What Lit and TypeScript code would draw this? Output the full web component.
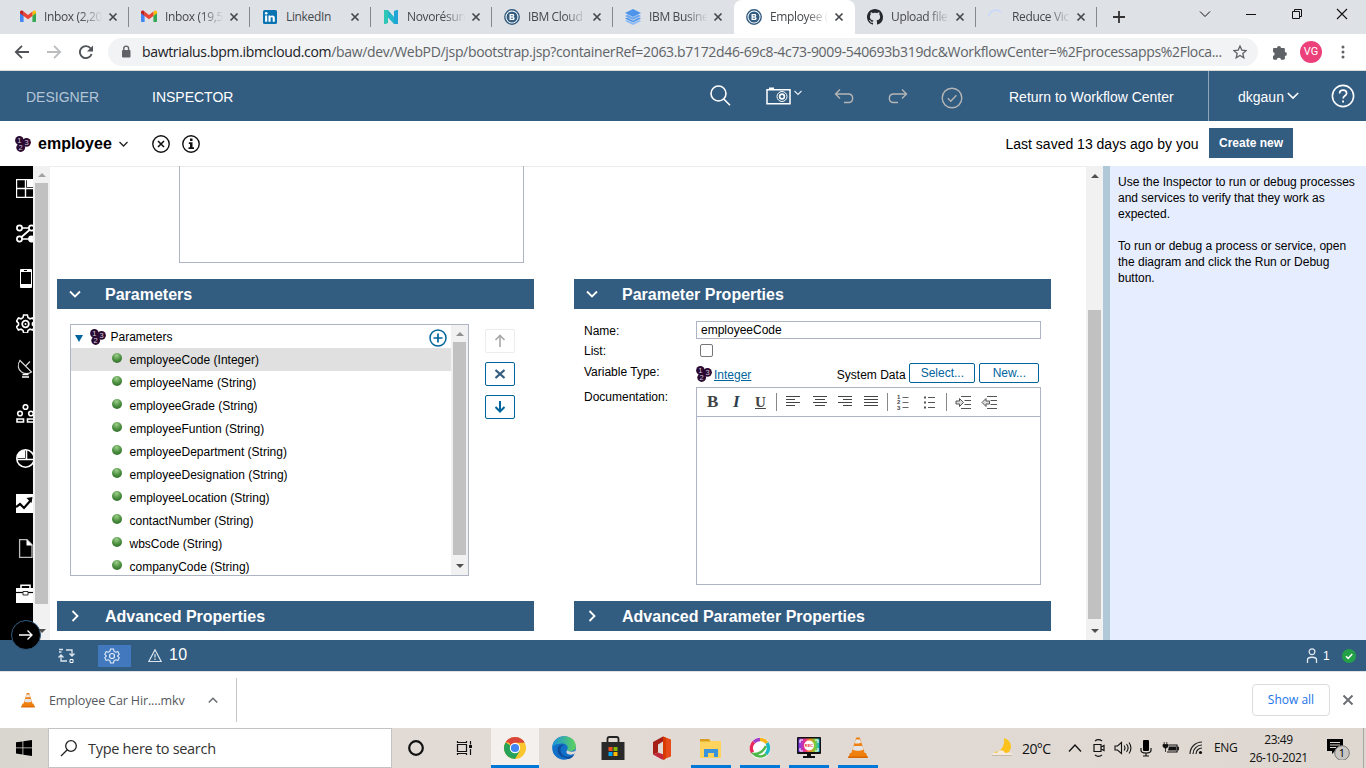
import { LitElement, html, svg, css } from "lit";
import { customElement } from "lit/decorators.js";

const icon = (w: number, h: number, body: unknown, cls = "") =>
  html`<svg class="ic ${cls}" width=${w} height=${h} viewBox="0 0 ${w} ${h}" fill="none">${body}</svg>`;

const gmail = svg`<path d="M0 3v9.200c0 .5.4.8.9.8H3.600V6z" fill="#4285f4"/><path d="M12.400 6v7h2.700c.5 0 .9-.3.9-.8V3z" fill="#34a853"/><path d="M12.400 3v4L16 4.300V3c0-1.300-1.500-2-2.600-1.200z" fill="#fbbc04"/><path d="M3.600 7V2.600L8 5.900l4.400-3.300V7L8 10.300z" fill="#ea4335"/><path d="M0 3v1.300L3.600 7V2.600l-1-.8C1.500 1 0 1.700 0 3z" fill="#c5221f"/>`;
const linkedin = svg`<rect x="1" y="1" width="14" height="14" rx="1.500" fill="#0a73b1"/><circle cx="4.200" cy="4.300" r="1.300" fill="#fff"/><path d="M3.100 6.500h2.100v6.200H3.100zM6.500 6.500h2v.9c.8-1.400 4.300-1.500 4.300 1.600v3.700h-2.100V9.300c0-1.500-2.100-1.300-2.100 0v3.400H6.500z" fill="#fff"/>`;
const novo = svg`<path d="M1 1h4l6 7V2l4-1v14h-4L5 8.500V14l-4 1z" fill="#23b5c9"/><path d="M1 1h4v13l-4 1z" fill="#2ec7b6"/><path d="M11 2l4-1v14h-4z" fill="#1fa6d6"/>`;
const ibm = svg`<circle cx="8" cy="8" r="7.200" stroke="#325c80" stroke-width="1.400" fill="#fff"/><circle cx="8" cy="8" r="5.500" fill="#325c80"/><path d="M5.500 5h3.300c1.900 0 1.900 2.600.5 2.900 1.900.3 1.800 3.100-.4 3.100H5.500z" fill="#fff"/><path d="M6.800 6.800h2M6.800 9.200h2.200" stroke="#325c80"/>`;
const layers = svg`<path d="M8 0l8 4-8 4-8-4z" fill="#4d94ea"/><path d="M0 7l2.500-1.200L8 8.600l5.500-2.800L16 7l-8 4z" fill="#6ba6f0"/><path d="M0 9.500l2-.9L8 11.700l6-3.100 2 .9-8 4z" fill="#4d94ea"/><path d="M0 12l2-.9 6 3 6-3 2 .9-8 4z" fill="#8abaf5"/>`;
const github = svg`<path fill="#24292f" d="M8 0C3.580 0 0 3.580 0 8c0 3.540 2.290 6.530 5.470 7.590.4.070.55-.17.55-.38 0-.19-.01-.82-.01-1.490-2.010.37-2.530-.49-2.690-.94-.09-.23-.48-.94-.82-1.130-.28-.15-.68-.52-.01-.53.63-.01 1.080.58 1.230.82.72 1.210 1.870.87 2.330.66.07-.52.28-.87.51-1.070-1.780-.2-3.640-.89-3.640-3.950 0-.87.31-1.590.82-2.150-.08-.2-.36-1.020.08-2.120 0 0 .67-.21 2.200.82.64-.18 1.320-.27 2-.27s1.360.09 2 .27c1.530-1.040 2.200-.82 2.200-.82.44 1.100.16 1.920.08 2.120.51.56.82 1.270.82 2.150 0 3.070-1.870 3.750-3.650 3.950.29.25.54.73.54 1.480 0 1.070-.01 1.930-.01 2.200 0 .21.15.46.55.38A8 8 0 0 0 16 8c0-4.420-3.580-8-8-8z"/>`;
const spinner = svg`<path d="M1 7a7.200 7.200 0 0 1 12-4" stroke="#c6d8fb" stroke-width="1.700"/>`;

const TABS: [unknown, string, boolean?][] = [
  [gmail, "Inbox (2,20"], [gmail, "Inbox (19,5"], [linkedin, "LinkedIn"],
  [novo, "Novorésun"], [ibm, "IBM Cloud"], [layers, "IBM Busine"],
  [ibm, "Employee (", true], [github, "Upload file"], [spinner, "Reduce Vic"],
];

const FIELDS = ["employeeCode (Integer)", "employeeName (String)", "employeeGrade (String)", "employeeFuntion (String)",
  "employeeDepartment (String)", "employeeDesignation (String)", "employeeLocation (String)", "contactNumber (String)",
  "wbsCode (String)", "companyCode (String)"];

const typeIcon = (s = 16) => html`<svg class="ic" width=${s} height=${s} viewBox="0 0 16 16"><g fill="#2a0a30"><circle cx="4.400" cy="4.400" r="4.300"/><circle cx="11.500" cy="6.300" r="4.400"/><circle cx="5.700" cy="11.500" r="4.400"/><path d="M4 4h7v4l-6 4z"/></g><g fill="#d5c9da" font-family="Liberation Sans" font-size="7.500" text-anchor="middle"><text x="4.300" y="7">1</text><text x="11.700" y="9">3</text><text x="5.600" y="14.300">2</text></g></svg>`;

const RAIL = [
  svg`<path d="M.5.500h18v18H.5zM.5 9.500h18M9.500.500v18" stroke="#fff" stroke-width="1.400"/><path d="M11 0h8v8h-8z" fill="#fff"/>`,
  svg`<g stroke="#fff" stroke-width="1.700"><circle cx="3.500" cy="4" r="2.600"/><circle cx="15.500" cy="4" r="2.600"/><circle cx="3.500" cy="15" r="2.600"/><path d="M6 4h7M13.500 6L5.500 13M6 15h7"/></g><circle cx="15.500" cy="15" r="3.400" fill="#fff"/>`,
  svg`<rect x="4" y="0" width="12" height="19" rx="1" fill="#fff"/><rect x="5" y="3" width="10" height="12" fill="#000"/><path d="M8 1.500h3" stroke="#000"/>`,
  svg`<path d="M7.600 1h3.800l.6 2.600 2 1.200 2.600-.8 1.900 3.200-2 1.900v1.800l2 1.900-1.900 3.200-2.600-.8-2 1.200-.6 2.600H7.600L7 16.400l-2-1.200-2.600.8L.5 12.800l2-1.900V9.100l-2-1.900L2.400 4l2.600.8 2-1.200z" stroke="#fff" stroke-width="1.600"/><circle cx="9.500" cy="10" r="3.300" stroke="#fff" stroke-width="1.800"/><circle cx="9.500" cy="10" r="1" fill="#fff"/>`,
  svg`<path d="M4 1.500c-3 4-2 9 1.500 11.500 3 2 7 2 10 0L3.500 1M9.500 7L14 2.500" stroke="#ddd" stroke-width="1.100"/><path d="M6.500 15.500h6M6 18h7" stroke="#fff" stroke-width="1.500"/>`,
  svg`<g stroke="#fff" stroke-width="1.600"><circle cx="9.500" cy="3" r="2.300"/><circle cx="4" cy="9.500" r="2.300"/><circle cx="15" cy="9.500" r="2.300"/><path d="M1 18v-3h6.500v3zM11.500 18v-3H18v3z"/></g>`,
  svg`<circle cx="9.500" cy="9.500" r="8.700" stroke="#fff" stroke-width="1.600"/><path d="M9 9V1A8.300 8.300 0 0 0 1 9z" fill="#fff"/><path d="M1 10.500h17M10.500 1v9" stroke="#fff" stroke-width="1.600"/>`,
  svg`<path d="M0 0h19v19H0z" fill="#fff"/><path d="M0 13l4-3 4 4 7-8" stroke="#000" stroke-width="2.200"/><path d="M10.500 4l6-1-1 6z" fill="#000"/>`,
  svg`<path d="M3.600.7H11l5 5v12.600H3.600z" stroke="#bbb" stroke-width="1.300"/><path d="M10.500.500v6h6z" fill="#fff"/>`,
  svg`<path d="M5 4V1.200h9V4" stroke="#fff" stroke-width="1.600"/><path d="M0 4h19v15H0z" fill="#fff"/><path d="M0 8.500h19" stroke="#000" stroke-width="1.200"/><path d="M7 7.500h5v3.500H7z" fill="#fff" stroke="#333"/>`,
];

const cone = svg`<path d="M9.200 1.500h3.600L18 18H4z" fill="#f08011"/><path d="M8 6l.9-2.500h4.200L14 6.800c-1.500 1-4.500 1-6.400.400z" fill="#e8e8e8"/><path d="M6.600 10h8.800l1.100 3.500c-3 1.700-8 1.700-11 0z" fill="#e4e4e4"/><path d="M3 17h16l1.800 5H1.200z" fill="#ef7f0c"/><path d="M1.200 20.500h19.600V22H1.200z" fill="#d96500"/>`;

@customElement("app-root")
export class AppRoot extends LitElement {
  static styles = css`
    :host { display: flex; flex-direction: column; width: 1366px; height: 768px; overflow: hidden; background: #fff; color: #000;
      font: 12px/14px "Liberation Sans", Arial, sans-serif; }
    * { box-sizing: border-box; }
    .ic { display: block; flex: none; }
    .ui { font-family: "Open Sans", "Noto Sans", sans-serif; white-space: nowrap; }

    .tabs { display: flex; height: 34px; background: #dee1e6; padding-left: 8px; flex: none; }
    .tab { display: flex; align-items: center; width: 121px; height: 34px; padding-left: 12px; flex: none; }
    .tab .label { width: 62px; margin: 0 3px 0 8px; font-size: 12px; letter-spacing: -.35px; line-height: 18px; color: #45484c;
      -webkit-mask-image: linear-gradient(90deg, #000 60%, transparent 96%); }
    .tab .label.short { -webkit-mask-image: none; }
    .tab::after { content: ""; width: 1px; height: 20px; background: #85888c; margin-left: 10px; flex: none; }
    .tab.before::after, .tab.on::after { background: transparent; }
    .tab.on { background: #fff; border-radius: 8px 8px 0 0; }
    .win { flex: 1; display: grid; grid-template-columns: 86px 46px 46px 45px auto; padding-left: 16px; align-items: start; }
    .win .ic { margin-top: 8px; }
    .win .ic.plus { margin-top: 11px; }

    .bar { display: grid; grid-template-columns: 33px 32px 29px 1164px 28px 40px auto; align-items: center; height: 37px; padding-left: 14px;
      border-bottom: 1px solid #d9dbd8; flex: none; }
    .pill { width: 1150px; height: 28px; border-radius: 14px; background: #f1f3f4; display: flex; align-items: center; padding-left: 12px; }
    .pill .url { width: 1091px; margin-left: 10px; font-size: 14px; line-height: 20px; letter-spacing: -.33px; color: #5f6368; padding-bottom: 1px; }
    .url b { font-weight: 400; color: #202124; }
    .avatar { width: 22px; height: 22px; border-radius: 50%; background: #ec407a; color: #fff; font: 11px/22px Roboto, sans-serif; text-align: center; }

    .head { display: grid; grid-template-columns: 126px 558px 56px 68px 53px 54px 68px 199px 123px auto; align-items: center; height: 50px;
      padding-left: 26px; background: #325c80; color: #fff; font-size: 14px; line-height: 16px; flex: none; }
    .head span { padding-top: 2px; }
    .head .dim { color: #b4c6d6; }
    .user { height: 50px; border-left: 1px solid #8ea6ba; padding-left: 29px; display: flex; align-items: center; gap: 3px; }
    .low { margin-top: 3px; }

    .sub { display: grid; grid-template-columns: 23px 80px 34px 30px 824px 203px 84px; align-items: center; height: 45px; padding-left: 15px; flex: none; }
    .sub .ic { margin-top: 1px; }
    .sub .name { font-size: 16px; font-weight: 700; line-height: 20px; padding-top: 1px; }
    .sub .saved { font-size: 14px; line-height: 16px; margin-left: -.5px; }
    .create { width: 84px; height: 30px; background: #325c80; color: #fff; font-weight: 700; text-align: center; line-height: 29px; padding-top: 1px; margin-bottom: 2px; }

    .main { display: flex; height: 474px; flex: none; position: relative; }
    .rail { width: 33px; background: #000; padding: 13px 0 0 16px; overflow: hidden; display: flex; flex-direction: column; gap: 26px; }
    .sb { background: #f1f1f1; display: flex; flex-direction: column; align-items: center; justify-content: space-between; flex: none; }
    .thumb { width: 13px; background: #c1c1c1; }
    .sb.l { width: 17px; padding: 7px 0 7px; }
    .sb.l .thumb { height: 421px; margin: 6px 0 auto; }
    .sb.r { width: 17px; padding: 8px 0 7px; }
    .sb.r .thumb { height: 309px; margin: 132px 0 auto; }
    .go { position: absolute; left: 11px; top: 454px; width: 30px; height: 30px; border-radius: 50%; background: #000; border: 1.500px solid #325c80;
      display: flex; align-items: center; justify-content: center; z-index: 2; }
    .content { width: 1036px; padding-left: 7px; border-top: 1px solid #ececec; flex: none; }
    .docbox { width: 345px; height: 97px; margin-left: 122px; border: 1px solid #aeb4c4; border-top: 0; margin-top: -1px; }
    .cols { display: grid; grid-template-columns: 477px 477px; column-gap: 40px; margin-top: 16px; }
    .sect { height: 30px; background: #325c80; color: #fff; font-size: 16px; font-weight: 700; line-height: 28px; display: flex; align-items: center; padding-left: 12px; }
    .sect span { padding-top: 2px; }
    .sect .ic { margin-right: 24px; }
    .left { display: flex; height: 292px; padding: 15px 0 0 13px; gap: 16px; }
    .tree { width: 399px; height: 252px; border: 1px solid #aeb4c4; display: flex; overflow: hidden; }
    .rows { width: 380px; }
    .root { height: 23px; display: flex; align-items: center; padding-left: 4px; }
    .root .grow { flex: 1; margin-left: 4.500px; }
    .root .tri { margin: 4px 7px 0 0; }
    .root .add { margin: 2px 4px 0 0; }
    .row { height: 23px; display: flex; align-items: center; padding-left: 41px; gap: 7.500px; line-height: 21px; }
    .row span { padding-top: 2px; }
    .row.sel { background: #e0e0e0; }
    .dot { width: 10px; height: 10px; border-radius: 50%; margin-bottom: 4px; background: radial-gradient(circle at 45% 25%, #9ccf8a, #4b8f3f 50%, #245c22); }
    .sb.t { width: 17px; padding: 7px 0 7px; }
    .sb.t .thumb { height: 213px; margin: 6px 0 auto; }
    .side { display: flex; flex-direction: column; gap: 9px; padding-top: 5px; }
    .btn { border: 1px solid #00649d; border-radius: 2px; display: flex; align-items: center; justify-content: center; color: #00649d; background: #fff; }
    .side .btn { width: 30px; height: 24px; }
    .side .btn.off { border-color: #ececec; }
    .props { display: grid; grid-template-columns: 112px 345px; grid-template-rows: 20px 20px 26px 198px; padding: 12px 0 0 10px; height: 292px; }
    .input { height: 18px; border: 1px solid #aeb4c4; padding-left: 4px; line-height: 16px; }
    .lab { line-height: 20px; }
    .lab.v { padding-top: 1px; }
    .check { width: 13px; height: 13px; border: 1px solid #767676; border-radius: 2px; margin: 3px 0 0 4px; }
    .vt { display: flex; align-items: center; padding: 1px 0 4px; }
    .vt a { color: #00649d; text-decoration: underline; margin: 4px 85px 0 2px; }
    .vt .sys { margin: 4px 3px 0 .5px; width: 69.500px; white-space: nowrap; }
    .vt .btn { width: 66px; height: 20px; line-height: 18px; margin-right: 4px; }
    .vt .btn.new { width: 60px; margin: 0; }
    .vt .ic { margin-top: 3px; }
    .editor { border: 1px solid #aeb4c4; }
    .tools { display: grid; grid-template-columns: 26px 22px 22px 9px 27px 26px 26px 23px 10px 27px 22px 9px 26px 17px; align-items: center; height: 29px;
      padding-left: 9px; border-bottom: 1px solid #aeb4c4; font: bold 17px/20px "Liberation Serif", serif; color: #444; }
    .tools .sep { width: 1px; height: 18px; background: #888; }
    .tools b { padding-left: 1px; }
    .tools i { padding-left: 1px; color: #2c3e50; }
    .tools u { font-size: 15px; padding-left: 1px; }
    .split { width: 7px; background: #b0c8d8; }
    .help { flex: 1; background: #e6edfe; padding: 8px 8px 0; line-height: 16px; }
    .help p { margin: 0 0 16px; white-space: nowrap; }

    .status { display: grid; grid-template-columns: 40px 50px 21px 1137px 17px 19px auto; align-items: center; height: 31px; padding-left: 58px;
      background: #325c80; color: #fff; flex: none; }
    .status .cog { width: 33px; height: 22px; background: #4178be; display: flex; align-items: center; padding-left: 6px; margin-top: 1px; }
    .status .num { font-size: 16px; line-height: 20px; padding-bottom: 1px; letter-spacing: .3px; }
    .status .one { padding-top: 1px; }

    .dl { display: flex; align-items: center; height: 57px; border-top: 1px solid #dfe1e5; padding-left: 21px; flex: none; }
    .dl .file { width: 136px; margin: 1px 23px 0 14px; font-size: 12.500px; letter-spacing: -.13px; line-height: 18px; color: #55585c; }
    .dl .line { width: 1px; height: 44px; background: #c4c6c9; margin: 0 1015px 0 18px; }
    .show { width: 78px; height: 32px; border: 1px solid #dadce0; border-radius: 4px; color: #1a73e8; text-align: center; line-height: 29px; font-size: 12px; font-weight: 500; margin-right: 12px; }

    .task { display: flex; height: 40px; background: linear-gradient(90deg, #d9d6d0, #e2dad5 30%, #e1dad4 70%, #ded8d1); flex: none; color: #111; }
    .start { width: 48px; display: flex; align-items: center; justify-content: center; }
    .search { width: 344px; border: 1px solid #c4c3c2; background: #fff; display: flex; align-items: center; padding-left: 11px; gap: 10px; font-size: 14.500px; letter-spacing: -.3px; color: #333; }
    .search span { padding-top: 1px; }
    .app { width: 49px; display: flex; align-items: center; justify-content: center; flex: none; }
    .app.cort { width: 48px; }
    .app.tv { width: 51px; padding-right: 3px; }
    .app.cur { width: 48px; background: #f3f0ed; border-bottom: 3px solid #0078d7; padding-top: 3px; }
    .app.run { border-bottom: 3px solid #0078d7; width: 40px; margin-left: 9px; padding-top: 3px; }
    .app.run.first { margin-left: 5px; }
    .tray { display: grid; grid-template-columns: 31px 46px 24px 22px 26px 22px 27px 25px 35px 77px 37px auto; align-items: center; margin-left: 113px; }
    .tray .deg { font-size: 14px; letter-spacing: -.6px; padding-top: 1px; }
    .tray .lang, .tray .clock { font-size: 12px; letter-spacing: -.4px; }
    .tray .clock { line-height: 18px; width: 59px; display: flex; flex-direction: column; align-items: center; padding-top: 1px; }
    .tray .edge { height: 40px; border-left: 1px solid #aaa6a2; }
  `;

  private arrow(up: boolean, c = "#505050") {
    return icon(8, 4, svg`<path d=${up ? "M0 4l4-4 4 4z" : "M0 0h8L4 4z"} fill=${c}/>`);
  }

  private sect(open: boolean, t: string) {
    return html`<div class="sect">${icon(12, 12, svg`<path d=${open ? "M1 3.500l5 5 5-5" : "M3.500 1l5 5-5 5"} stroke="#fff" stroke-width="1.800"/>`)}<span>${t}</span></div>`;
  }

  private lines(rows: number[][]) {
    return icon(16, 14, svg`${rows.map(([x, w], i) => svg`<path d="M${x} ${1.5 + i * (9 / (rows.length - 1))}h${w}" stroke="#444"/>`)}`);
  }

  render() {
    const x = svg`<path d="M1.500 1.500l7 7M8.500 1.500l-7 7" stroke="#45494d" stroke-width="1.700"/>`;
    return html`
      <div class="tabs">
        ${TABS.map(([g, t, on], i) => html`<div class="tab ${on ? "on" : ""} ${i === 5 ? "before" : ""}">${icon(16, 16, g)}<span class="label ui ${i === 2 ? "short" : ""}">${t}</span>${icon(10, 10, x)}</div>`)}
        <div class="win">
          ${icon(12, 12, svg`<path d="M6 0v12M0 6h12" stroke="#333" stroke-width="1.800"/>`, "plus")}
          ${icon(12, 12, svg`<path d="M1 3.500l5 5 5-5" stroke="#111"/>`)}
          ${icon(12, 12, svg`<path d="M1 6.500h10" stroke="#111"/>`)}
          ${icon(12, 12, svg`<path d="M1.500 3.500h7v7h-7zM3.500 3.500v-2h7v7h-2" stroke="#111"/>`)}
          ${icon(12, 12, svg`<path d="M1 1l10 10M11 1L1 11" stroke="#111" stroke-width="1.100"/>`)}
        </div>
      </div>
      <div class="bar">
        ${icon(15, 14, svg`<path d="M15 7H2M8 .8L1.800 7 8 13.200" stroke="#505357" stroke-width="1.800"/>`)}
        ${icon(15, 14, svg`<path d="M0 7h13M7 .8L13.200 7 7 13.200" stroke="#babcbe" stroke-width="1.800"/>`)}
        ${icon(15, 14, svg`<path d="M12.600 9a6 6 0 1 1-.9-5.500" stroke="#505357" stroke-width="1.900"/><path d="M14 .5v6H8z" fill="#505357"/>`)}
        <div class="pill">
          ${icon(12, 14, svg`<rect x="2" y="5" width="8.500" height="7.500" rx="1" fill="#5f6368"/><path d="M3.800 6V3.500a2.400 2.400 0 0 1 4.800 0V6" stroke="#5f6368" stroke-width="1.400"/>`)}
          <span class="url ui"><b>bawtrialus.bpm.ibmcloud.com</b>/baw/dev/WebPD/jsp/bootstrap.jsp?containerRef=2063.b7172d46-69c8-4c73-9009-540693b319dc&amp;WorkflowCenter=%2Fprocessapps%2Floca...</span>
          ${icon(14, 14, svg`<path d="M7 1l1.800 4.100 4.400.4-3.400 2.900 1 4.400L7 10.500l-3.800 2.300 1-4.400L.8 5.500l4.400-.4z" stroke="#5f6368" stroke-width="1.300"/>`)}
        </div>
        ${icon(15, 15, svg`<path d="M1 4.300c0-.7.5-1.200 1.200-1.200H5a2 2 0 1 1 4 0h2.700c.7 0 1.200.5 1.200 1.200v2.600a2 2 0 1 1 0 4v2.700c0 .7-.5 1.200-1.200 1.200H9a2.100 2.100 0 0 0-4.200 0H2.200c-.7 0-1.200-.5-1.200-1.200V11a2.100 2.100 0 0 0 0-4.100z" fill="#5f6368"/>`)}
        <div class="avatar">VG</div>
        ${icon(6, 14, svg`<g fill="#5f6368"><circle cx="3" cy="2" r="1.500"/><circle cx="3" cy="7" r="1.500"/><circle cx="3" cy="12" r="1.500"/></g>`)}
      </div>

      <div class="head">
        <span class="dim">DESIGNER</span><span>INSPECTOR</span>
        ${icon(22, 22, svg`<circle cx="8.500" cy="8.500" r="7.500" stroke="#fff" stroke-width="1.600"/><path d="M13.700 14l6.300 6.300" stroke="#fff" stroke-width="1.600"/>`)}
        ${icon(38, 20, svg`<path d="M1 3.800h23v14H1z" stroke="#fff" stroke-width="1.500"/><path d="M3 1.500h5v2H3z" fill="#fff"/><circle cx="16" cy="10.500" r="5" stroke="#fff"/><circle cx="16" cy="10.500" r="2.400" stroke="#fff" stroke-width="1.600"/><path d="M28.500 5l3.500 3.500L35.500 5" stroke="#e4ebf1" stroke-width="1.200"/>`)}
        ${icon(21, 16, svg`<path d="M6 1.500L1.500 6 6 10.500M1.500 6H15a4.300 4.300 0 0 1 0 8.500H10" stroke="#b5b5b5" stroke-width="1.400"/>`)}
        ${icon(21, 16, svg`<path d="M15 1.500L19.500 6 15 10.500M19.500 6H6a4.300 4.300 0 0 0 0 8.500h5" stroke="#b5b5b5" stroke-width="1.400"/>`)}
        ${icon(22, 22, svg`<circle cx="11" cy="11" r="9.800" stroke="#b5b5b5" stroke-width="1.400"/><path d="M6.800 11.200l3 3 5.600-6" stroke="#b5b5b5" stroke-width="1.400"/>`, "low")}
        <span>Return to Workflow Center</span>
        <div class="user"><span>dkgaun</span>${icon(12, 10, svg`<path d="M.8 2l5.200 5 5.200-5" stroke="#fff" stroke-width="1.700"/>`)}</div>
        ${icon(24, 24, svg`<circle cx="12" cy="12" r="10.600" stroke="#fff" stroke-width="1.600"/><path d="M8.600 9.500c0-4.500 7-4.200 7-.3 0 2.600-3.500 2.500-3.500 5.300" stroke="#fff" stroke-width="1.700"/><path d="M11.200 16.500h1.800v2h-1.800z" fill="#fff"/>`)}
      </div>

      <div class="sub">
        ${typeIcon(16)}<span class="name">employee</span>
        ${icon(12, 10, svg`<path d="M1.500 3l4 4 4-4" stroke="#222" stroke-width="1.300"/>`)}
        ${icon(20, 20, svg`<circle cx="9" cy="10" r="8.200" stroke="#111" stroke-width="1.400"/><path d="M6 7l6 6M12 7l-6 6" stroke="#111" stroke-width="1.600"/>`)}
        ${icon(20, 20, svg`<circle cx="9" cy="10" r="8.200" stroke="#111" stroke-width="1.400"/><path d="M8 4.500h2.500V7H8zM6.800 8.200h3.700v5H12V15H6.500v-1.800H8V10H6.800z" fill="#111"/>`)}
        <span class="saved">Last saved 13 days ago by you</span>
        <div class="create">Create new</div>
      </div>

      <div class="main">
        <div class="rail">${RAIL.map((r) => icon(19, 19, r))}</div>
        <div class="sb l">${this.arrow(true, "#a3a3a3")}<div class="thumb"></div>${this.arrow(false)}</div>
        <div class="content">
          <div class="docbox"></div>
          <div class="cols">
            <div>
              ${this.sect(true, "Parameters")}
              <div class="left">
                <div class="tree">
                  <div class="rows">
                    <div class="root">${icon(8, 7, svg`<path d="M0 0h8L4 7z" fill="#00649d"/>`, "tri")}${typeIcon()}<span class="grow">Parameters</span>
                      ${icon(18, 18, svg`<circle cx="9" cy="9" r="8" stroke="#00649d" stroke-width="1.500"/><path d="M9 4.500v9M4.500 9h9" stroke="#00649d" stroke-width="1.700"/>`, "add")}</div>
                    ${FIELDS.map((f, i) => html`<div class="row ${i ? "" : "sel"}"><div class="dot"></div><span>${f}</span></div>`)}
                  </div>
                  <div class="sb t">${this.arrow(true, "#8f8f8f")}<div class="thumb"></div>${this.arrow(false)}</div>
                </div>
                <div class="side">
                  <div class="btn off">${icon(12, 14, svg`<path d="M6 13V2M1.500 6L6 1.500 10.500 6" stroke="#a8a8a8" stroke-width="1.600"/>`)}</div>
                  <div class="btn">${icon(12, 12, svg`<path d="M1.500 2l9 8M10.500 2l-9 8" stroke="#325c80" stroke-width="2.300"/>`)}</div>
                  <div class="btn">${icon(12, 14, svg`<path d="M6 1v10M1.500 7L6 11.500 10.500 7" stroke="#00649d" stroke-width="2"/>`)}</div>
                </div>
              </div>
              ${this.sect(false, "Advanced Properties")}
            </div>
            <div>
              ${this.sect(true, "Parameter Properties")}
              <div class="props">
                <span class="lab">Name:</span><div class="input">employeeCode</div>
                <span class="lab">List:</span><div class="check"></div>
                <span class="lab v">Variable Type:</span>
                <div class="vt">${typeIcon()}<a>Integer</a><span class="sys">System Data</span><div class="btn">Select...</div><div class="btn new">New...</div></div>
                <span class="lab">Documentation:</span>
                <div class="editor">
                  <div class="tools">
                    <b>B</b><i>I</i><u>U</u><div class="sep"></div>
                    ${this.lines([[1, 14], [1, 9], [1, 14], [1, 9]])}${this.lines([[1, 14], [3, 10], [1, 14], [3, 10]])}
                    ${this.lines([[0, 14], [5, 9], [0, 14], [5, 9]])}${this.lines([[0, 14], [0, 14], [0, 14], [0, 14]])}
                    <div class="sep"></div>
                    ${icon(12, 16, svg`<path d="M5.500 3.500h6M5.500 8.500h6M5.500 13.500h6" stroke="#666"/><g fill="#444" font-family="Liberation Sans" font-size="6"><text x="0" y="5">1</text><text x="0" y="10.300">2</text><text x="0" y="15.500">3</text></g>`)}
                    ${icon(12, 14, svg`<path d="M4 2.500h7M4 7.500h7M4 12.500h7" stroke="#555"/><path d="M0 1.500h2v2H0zM0 6.500h2v2H0zM0 11.500h2v2H0z" fill="#555"/>`)}
                    <div class="sep"></div>
                    ${icon(17, 14, svg`<path d="M6 1.500h10M9.500 5.500h6.500M9.500 9.500h6.500M6 13.500h10" stroke="#555"/><path d="M1 6h3.500V3.500l4 4-4 4V9H1z" stroke="#555" fill="#ddd"/>`)}
                    ${icon(17, 14, svg`<path d="M6 1.500h10M9.500 5.500h6.500M9.500 9.500h6.500M6 13.500h10" stroke="#555"/><path d="M8.500 6H5V3.500l-4 4 4 4V9h3.500z" stroke="#555" fill="#ddd"/>`)}
                  </div>
                </div>
              </div>
              ${this.sect(false, "Advanced Parameter Properties")}
            </div>
          </div>
        </div>
        <div class="sb r">${this.arrow(true)}<div class="thumb"></div>${this.arrow(false)}</div>
        <div class="split"></div>
        <div class="help">
          <p>Use the Inspector to run or debug processes<br />and services to verify that they work as<br />expected.</p>
          <p>To run or debug a process or service, open<br />the diagram and click the Run or Debug<br />button.</p>
        </div>
        <div class="go">${icon(16, 12, svg`<path d="M1 6h13M9.500 1.500L14 6l-4.500 4.500" stroke="#fff" stroke-width="1.300"/>`)}</div>
      </div>

      <div class="status">
        ${icon(17, 16, svg`<path d="M1 1.500h4M1 4h2.500M8 2h6v6M11.500 5.500L14 8l2.500-2.500M9 13H3V7M.5 9.500L3 7l2.500 2.500" stroke="#dde6ee" stroke-width="1.300"/><path d="M12 11.500h3v3h-3z" stroke="#fff"/>`)}
        <div class="cog">${icon(16, 16, svg`<path d="M6.500 1h3l.5 2.200 1.700 1 2.200-.6 1.300 2.500L13.700 8l1.500 1.900-1.300 2.500-2.200-.6-1.700 1-.5 2.200h-3L6 12.800l-1.700-1-2.200.6L.8 9.900 2.300 8 .8 6.100l1.300-2.500 2.200.6 1.700-1z" stroke="#e4edf8" stroke-width="1.100"/><circle cx="8" cy="8" r="2.500" stroke="#e4edf8" stroke-width="1.200"/>`)}</div>
        ${icon(14, 14, svg`<path d="M7 .8L13.200 12.500H.8z" stroke="#dde6ee" stroke-width="1.200"/><path d="M7 5v3.500M7 9.500V11" stroke="#dde6ee" stroke-width="1.200"/>`)}
        <span class="num">10</span>
        ${icon(12, 15, svg`<circle cx="6" cy="3.800" r="2.900" stroke="#e4ebf1" stroke-width="1.200"/><path d="M1.500 15v-3.500c0-3 9-3 9 0V15" stroke="#e4ebf1" stroke-width="1.300"/>`)}
        <span class="one">1</span>
        ${icon(14, 15, svg`<circle cx="7" cy="8" r="7" fill="#24a148"/><path d="M4 8.200l2.200 2.200L10.200 6" stroke="#fff" stroke-width="1.500"/>`)}
      </div>

      <div class="dl ui">
        <svg class="ic" width="14" height="16" viewBox="1 0 20 23">${cone}</svg>
        <span class="file">Employee Car Hir....mkv</span>
        ${icon(10, 8, svg`<path d="M.8 6.500L5 2.300l4.200 4.200" stroke="#6b6e72" stroke-width="1.600"/>`)}
        <div class="line"></div><div class="show">Show all</div>
        ${icon(12, 12, svg`<path d="M1.500 1.500l9 9M10.500 1.500l-9 9" stroke="#6b6e72" stroke-width="1.900"/>`)}
      </div>

      <div class="task ui">
        <div class="start">${icon(16, 16, svg`<path d="M0 2.300L6.500 1.400v6.100H0zM7.300 1.300L16 0v7.500H7.300zM0 8.300h6.500v6.200L0 13.600zM7.300 8.300H16V16l-8.700-1.300z" fill="#000"/>`)}</div>
        <div class="search">${icon(18, 18, svg`<circle cx="11" cy="7" r="5.300" stroke="#222" stroke-width="1.300"/><path d="M7.300 10.800L1 17" stroke="#222" stroke-width="1.300"/>`)}<span>Type here to search</span></div>
        <div class="app cort">${icon(18, 18, svg`<circle cx="9" cy="9" r="6.800" stroke="#111" stroke-width="2.200"/>`)}</div>
        <div class="app tv">${icon(17, 16, svg`<path d="M1.500 1v1.500h9V1M1.500 15v-1.500h9V15M1.500 4.500h9v7h-9zM14.500 1v3.500M14.500 9v6" stroke="#111" stroke-width="1.200"/><path d="M13 5h3v3h-3z" fill="#111"/>`)}</div>
        <div class="app cur">${icon(24, 24, svg`<circle cx="12" cy="12" r="11" fill="#fbc52d"/><path d="M2.470 6.500A11 11 0 0 1 21.530 6.500H12z" fill="#d9453a"/><path d="M2.470 6.500A11 11 0 0 0 12 23l4.800-8.300L12 12z" fill="#27a259"/><path d="M4.500 4h15l2 2.500H12L8 10z" fill="#d9453a"/><circle cx="12" cy="12" r="5.200" fill="#fff"/><circle cx="12" cy="12" r="4.100" fill="#4285f4"/>`)}</div>
        <div class="app">${icon(24, 24, svg`<defs><linearGradient id="ed"><stop stop-color="#1793dd"/><stop offset="1" stop-color="#5fd35a"/></linearGradient></defs><circle cx="12" cy="12" r="11.800" fill="#1270c9"/><path d="M.3 11C1.500-3 23.500-3.500 23.800 10.500c0 5-7.300 6-9 3.500 2.500-3.500-1-6.800-5-6.500C5 7.800.8 9 .3 13z" fill="url(#ed)"/><path d="M8.500 14c0 6 7 9 14 4.500-1.500 2-3 3.500-5.500 4.500C12 21.500 4 20 5.800 12c.8-3 5-4.500 7-3-3 0-4.300 2.500-4.300 5z" fill="#0d4c9b"/><path d="M15 14.200c-2.500 4 4 6 8 3l.5-2.500c-3 1.500-6 1.200-8.500-.5z" fill="#e1dad4"/>`)}</div>
        <div class="app">${icon(24, 24, svg`<path d="M6.500 7V3c0-1.500.5-2 2-2h7c1.500 0 2 .5 2 2v4" stroke="#222" stroke-width="1.800"/><path d="M.5 6h23v18h-23z" fill="#292929"/><path d="M7.500 11h4v4h-4z" fill="#f25022"/><path d="M12.500 11h4v4h-4z" fill="#7fba00"/><path d="M7.500 16h4v4h-4z" fill="#00a4ef"/><path d="M12.500 16h4v4h-4z" fill="#ffb900"/>`)}</div>
        <div class="app">${icon(20, 24, svg`<path d="M1 6l10-5.500v5L6 8.500v8L1 18.500z" fill="#a51f17"/><path d="M11 .5l8 3v17l-8 3z" fill="#e64a19"/><path d="M1 18.500l5-2 7 2.500v4.500h-3z" fill="#c2263a"/><path d="M11 .5l3 1.200v20.800L11 23.500z" fill="#d83b01"/>`)}</div>
        <div class="app run first">${icon(24, 24, svg`<path d="M1 3h9l2 2h10v17H1z" fill="#ffd35c"/><path d="M1 3h9l1.500 2.500H1z" fill="#d99f1c"/><path d="M5 21v-8h14v8h-4v-4H9v4z" fill="#3a94dc"/>`)}</div>
        <div class="app run">${icon(24, 24, svg`<circle cx="12" cy="12" r="10.500" fill="#fff"/><path d="M4.500 16.500A8.500 8.500 0 0 1 6 6" stroke="#e9285e" stroke-width="3.500"/><path d="M6 6a8.500 8.500 0 0 1 6-2.500" stroke="#a33ac8" stroke-width="3.500"/><path d="M12 3.500a8.500 8.500 0 0 1 7 3.500" stroke="#f7b517" stroke-width="3.500"/><path d="M19 7a8.500 8.500 0 0 1-1 11" stroke="#19b9c8" stroke-width="3.500"/><path d="M18 18a8.500 8.500 0 0 1-12 0c5 0 9-2 12-8" stroke="#4fb84a" stroke-width="2.600"/>`)}</div>
        <div class="app run">${icon(24, 22, svg`<defs><linearGradient id="tv"><stop stop-color="#7b3ff2"/><stop offset=".3" stop-color="#e92d8b"/><stop offset=".55" stop-color="#f68b1e"/><stop offset=".8" stop-color="#75cf3b"/><stop offset="1" stop-color="#10b4e4"/></linearGradient></defs><rect width="24" height="17" rx="1" fill="#111"/><path d="M1.500 1.500h21v13.500h-21z" fill="url(#tv)"/><path d="M3 6V3h3M18 3h3v3M21 11v3h-3M6 14H3v-3" stroke="#fff"/><circle cx="12" cy="8.500" r="5" fill="#fff"/><text x="12" y="10.300" text-anchor="middle" font-family="Liberation Sans" font-weight="bold" font-size="4" fill="#e33">REC</text><path d="M10 17h4v2h4v2H6v-2h4z" fill="#111"/>`)}</div>
        <div class="app run">${icon(22, 24, cone)}</div>
        <div class="tray">
          ${icon(24, 20, svg`<path d="M13 0c7 2 9 9 5 14-3 3-11 3-15 0 7 0 11-6 10-14z" fill="#fbc21d"/><path d="M0 17c2-3 5-2 6-2 2-4 7-3 8 0 3-1 7-1 8 2z" fill="#f2e9df"/><path d="M1 17.500h20" stroke="#c9b8a6"/>`)}
          <span class="deg">20°C</span>
          ${icon(14, 10, svg`<path d="M1 8.500l6-6.500 6 6.500" stroke="#111" stroke-width="1.300"/>`)}
          ${icon(14, 18, svg`<path d="M2 5.500h7v7H2zM9 8l3-1.500v5L9 10M3 2c2-1.500 5-1.500 7 0M3 16c2 1.500 5 1.500 7 0" stroke="#111" stroke-width="1.200"/>`)}
          ${icon(18, 16, svg`<path d="M1 6h2.500L7.500 2.500v11L3.500 10H1zM10 5.500c1.200 1.500 1.200 3.500 0 5M12.500 4c2 2.500 2 5.500 0 8M15 2.500c2.500 3.500 2.500 7.500 0 11" stroke="#111" stroke-width="1.100"/>`)}
          ${icon(12, 18, svg`<rect x="3" y="1" width="6" height="11" rx="1" fill="#000"/><path d="M1 9v2.500c0 2 2 2.500 5 2.500s5-.5 5-2.500V9M6 14v3M3 17h6" stroke="#111" stroke-width="1.200"/>`)}
          ${icon(17, 14, svg`<path d="M6.500 4H15v7H5" stroke="#111" stroke-width="1.200"/><path d="M7 5.500h7v4H6z" fill="#111"/><path d="M15.500 6h1.200v3h-1.200zM1 3.500h5v2.200L3.500 7.500 1 5.700zM2.200 1v2.500M4.800 1v2.500M3.500 7v4" fill="#111" stroke="#111" stroke-width=".8"/>`)}
          ${icon(14, 14, svg`<path d="M1 13A12 12 0 0 1 13 1M4 13a9 9 0 0 1 9-9M7 13a6 6 0 0 1 6-6" stroke="#222" stroke-width="1.200"/><circle cx="11.500" cy="11.500" r="1.600" fill="#111"/>`)}
          <span class="lang">ENG</span>
          <div class="clock"><span>23:49</span><span>26-10-2021</span></div>
          ${icon(26, 24, svg`<path d="M1 3h16v12H9l-3 3v-3H1z" fill="#000"/><path d="M4 6.500h10M4 9h10M4 11.500h6" stroke="#ded8d1"/><circle cx="16" cy="17" r="7.300" fill="#c9c6c3" stroke="#777"/><text x="16" y="21" text-anchor="middle" font-family="Open Sans" font-size="11" fill="#000">1</text>`)}
          <div class="edge"></div>
        </div>
      </div>
    `;
  }
}
